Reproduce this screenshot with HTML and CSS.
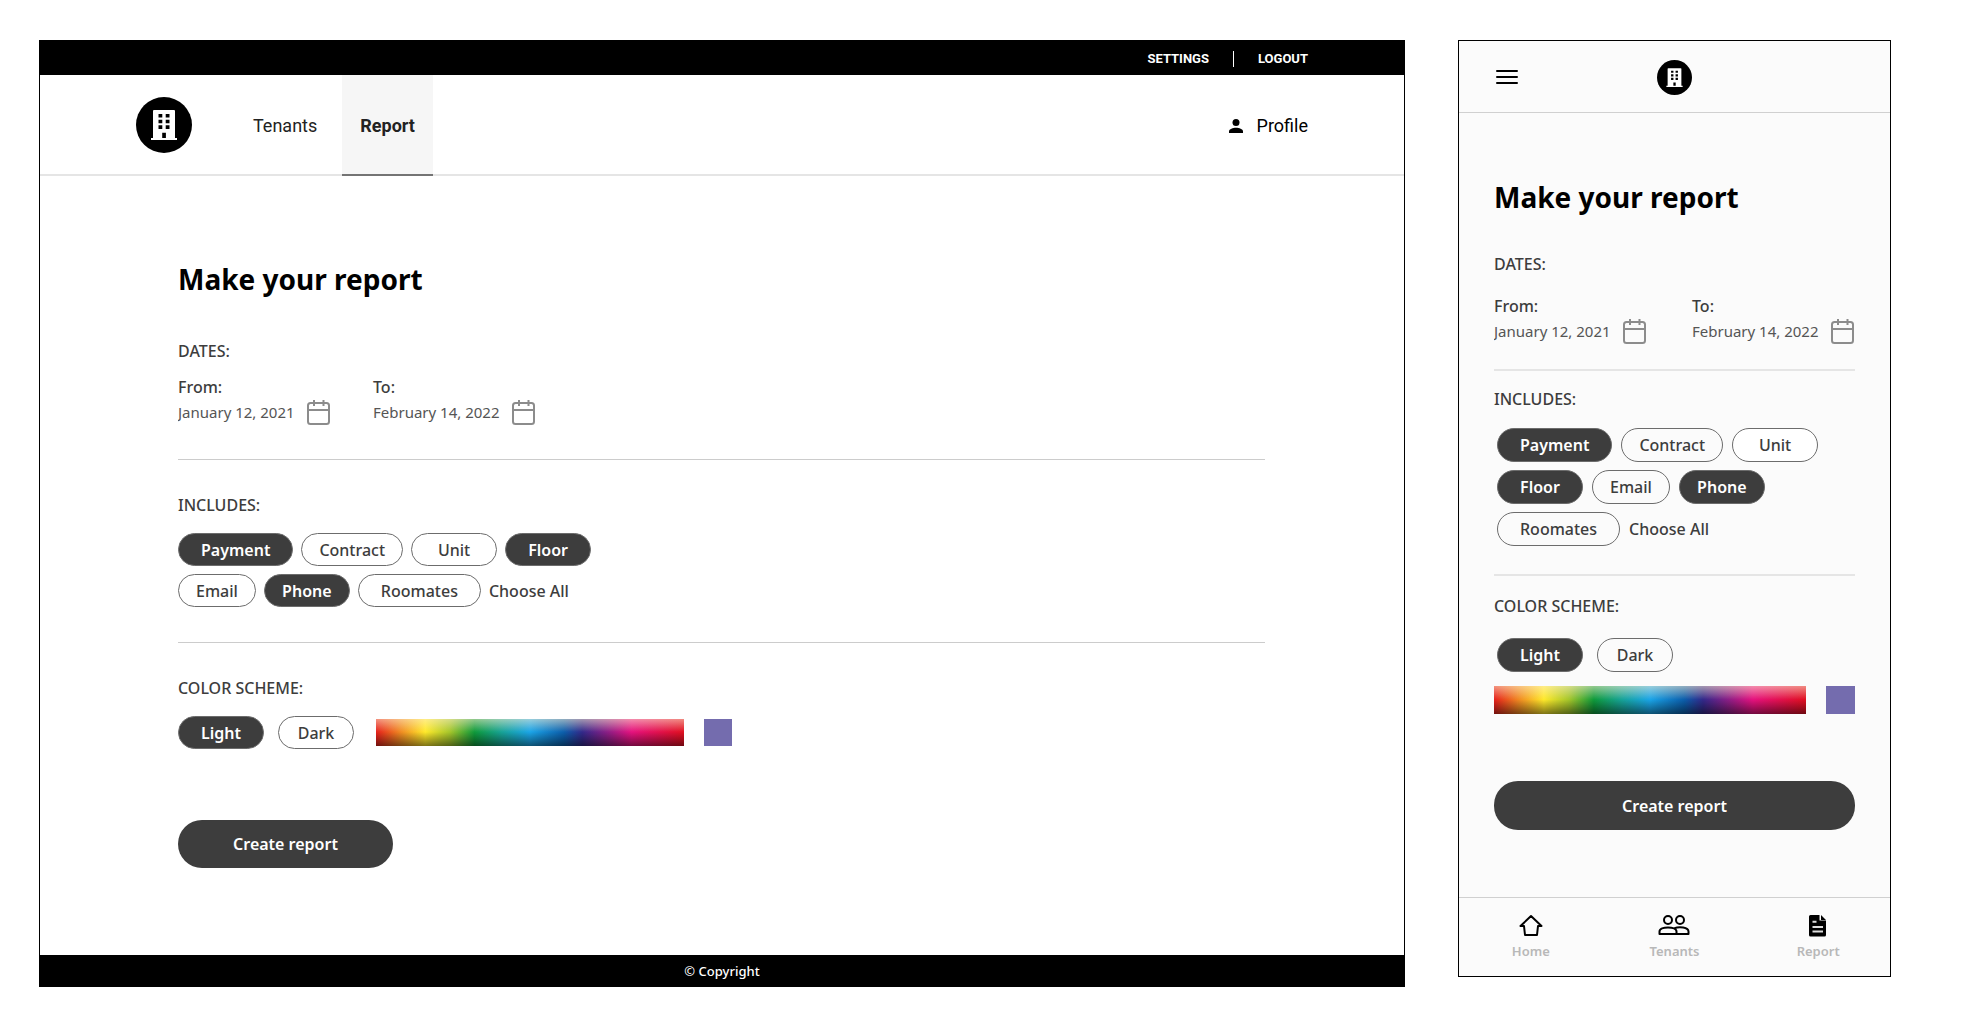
FILE: index.html
```html
<!DOCTYPE html>
<html lang="en">
<head>
<meta charset="utf-8">
<meta name="viewport" content="width=device-width, initial-scale=1">
<title>Make your report</title>
<link rel="stylesheet" href="styles.css">
</head>
<body>
<svg class="sprite" aria-hidden="true">
  <symbol id="logo" viewBox="0 0 56 56">
    <circle cx="28" cy="28" r="28" fill="#000"/>
    <path fill="#fff" fill-rule="evenodd" d="M18 13h20q1 0 1 1v27h2v2H15v-2h2V14q0-1 1-1zM22.500 17v3.500h3.800v-3.500zM29.700 17v3.500h3.800v-3.500zM22.500 22.700v3.600h3.800v-3.600zM29.700 22.700v3.600h3.800v-3.600zM22.500 28.300v3.600h3.800v-3.600zM29.700 28.300v3.600h3.800v-3.600zM26.200 35.800v5.200h3.700v-5.200z"/>
  </symbol>
  <symbol id="calendar" viewBox="0 0 24 26">
    <g fill="none" stroke="#8c8c8c" stroke-width="2">
      <rect x="1" y="4" width="21" height="21" rx="2.500"/>
      <path d="M1 11h21M7 1v6M16.500 1v6"/>
    </g>
  </symbol>
</svg>

<section class="frame desktop">
  <div class="topbar">
    <a href="#settings">SETTINGS</a>
    <a href="#logout">LOGOUT</a>
  </div>
  <header class="header">
    <a class="brand" href="#home" aria-label="Home"><svg class="brand-icon"><use href="#logo"/></svg></a>
    <nav class="tabs">
      <a class="tab" href="#tenants">Tenants</a>
      <a class="tab tab-active" href="#report">Report</a>
    </nav>
    <a class="profile" href="#profile">
      <svg width="14" height="14" viewBox="0 0 14 14" aria-hidden="true"><circle cx="7" cy="3.500" r="3.500"/><path d="M0 14v-1.600C0 10 4 8.800 7 8.800s7 1.200 7 3.600V14z"/></svg>
      Profile
    </a>
  </header>
  <main class="report">
    <h1>Make your report</h1>
    <form>
      <fieldset class="group">
        <legend>DATES:</legend>
        <div class="dates">
          <div class="date">
            <label for="d-from">From:</label>
            <div class="date-row">
              <input class="date-from" id="d-from" type="text" value="January 12, 2021">
              <button type="button" aria-label="Pick start date"><svg><use href="#calendar"/></svg></button>
            </div>
          </div>
          <div class="date">
            <label for="d-to">To:</label>
            <div class="date-row">
              <input class="date-to" id="d-to" type="text" value="February 14, 2022">
              <button type="button" aria-label="Pick end date"><svg><use href="#calendar"/></svg></button>
            </div>
          </div>
        </div>
      </fieldset>
      <fieldset class="group">
        <legend>INCLUDES:</legend>
        <div class="chips">
          <label class="chip chip-wide"><input type="checkbox" checked>Payment</label>
          <label class="chip chip-compact"><input type="checkbox">Contract</label>
          <label class="chip"><input type="checkbox">Unit</label>
          <label class="chip"><input type="checkbox" checked>Floor</label>
          <label class="chip chip-compact"><input type="checkbox">Email</label>
          <label class="chip"><input type="checkbox" checked>Phone</label>
          <label class="chip chip-wide"><input type="checkbox">Roomates</label>
          <button class="choose-all" type="button">Choose All</button>
        </div>
      </fieldset>
      <fieldset class="group">
        <legend>COLOR SCHEME:</legend>
        <div class="scheme">
          <div class="modes">
            <label class="chip"><input type="radio" name="d-mode" checked>Light</label>
            <label class="chip chip-compact"><input type="radio" name="d-mode">Dark</label>
          </div>
          <div class="picker">
            <input class="spectrum" type="range" aria-label="Hue">
            <input class="swatch" type="color" value="#746cae" aria-label="Selected color">
          </div>
        </div>
      </fieldset>
      <button class="submit" type="submit">Create report</button>
    </form>
  </main>
  <footer class="footer">© Copyright</footer>
</section>

<section class="frame mobile">
  <header class="m-header">
    <button class="menu" type="button" aria-label="Menu"><svg width="22" height="16" viewBox="0 0 22 16"><path d="M1 2h20M1 8h20M1 14h20" stroke="#000" stroke-width="2" stroke-linecap="round"/></svg></button>
    <a class="brand" href="#home" aria-label="Home"><svg class="brand-icon"><use href="#logo"/></svg></a>
  </header>
  <main class="report">
    <h1>Make your report</h1>
    <form>
      <fieldset class="group">
        <legend>DATES:</legend>
        <div class="dates">
          <div class="date">
            <label for="m-from">From:</label>
            <div class="date-row">
              <input class="date-from" id="m-from" type="text" value="January 12, 2021">
              <button type="button" aria-label="Pick start date"><svg><use href="#calendar"/></svg></button>
            </div>
          </div>
          <div class="date">
            <label for="m-to">To:</label>
            <div class="date-row">
              <input class="date-to" id="m-to" type="text" value="February 14, 2022">
              <button type="button" aria-label="Pick end date"><svg><use href="#calendar"/></svg></button>
            </div>
          </div>
        </div>
      </fieldset>
      <fieldset class="group">
        <legend>INCLUDES:</legend>
        <div class="chips">
          <label class="chip chip-wide"><input type="checkbox" checked>Payment</label>
          <label class="chip chip-compact"><input type="checkbox">Contract</label>
          <label class="chip chip-filled"><input type="checkbox">Unit</label>
          <label class="chip"><input type="checkbox" checked>Floor</label>
          <label class="chip chip-compact"><input type="checkbox">Email</label>
          <label class="chip"><input type="checkbox" checked>Phone</label>
          <label class="chip chip-wide"><input type="checkbox">Roomates</label>
          <button class="choose-all" type="button">Choose All</button>
        </div>
      </fieldset>
      <fieldset class="group">
        <legend>COLOR SCHEME:</legend>
        <div class="scheme">
          <div class="modes">
            <label class="chip"><input type="radio" name="m-mode" checked>Light</label>
            <label class="chip chip-compact"><input type="radio" name="m-mode">Dark</label>
          </div>
          <div class="picker">
            <input class="spectrum" type="range" aria-label="Hue">
            <input class="swatch" type="color" value="#746cae" aria-label="Selected color">
          </div>
        </div>
      </fieldset>
      <button class="submit" type="submit">Create report</button>
    </form>
  </main>
  <nav class="bottom-nav">
    <a href="#home">
      <svg width="32" height="24" viewBox="0 0 32 24" fill="none" stroke="#000" stroke-width="2" stroke-linejoin="round" stroke-linecap="round"><path d="M16 3L5.500 13H9l1 9h12l1-9h3.500z"/></svg>
      Home
    </a>
    <a href="#tenants">
      <svg width="32" height="24" viewBox="0 0 32 24" fill="none" stroke="#000" stroke-width="2" stroke-linejoin="round"><circle cx="10" cy="7" r="4"/><circle cx="22" cy="7" r="4"/><path d="M1.500 21v-2.500c0-5.500 17-5.500 17 0V21zM16.500 15.200c4.500-1.800 14-1.200 14 3.300V21h-12"/></svg>
      Tenants
    </a>
    <a href="#report">
      <svg width="32" height="24" viewBox="0 0 32 24"><path d="M9 2h8.500v5.500H24V22a1.500 1.500 0 0 1-1.500 1.500H8.500A1.500 1.500 0 0 1 7 22V3.500A1.500 1.500 0 0 1 8.500 2zM19 2l5 5h-5z" fill="#000"/><path d="M10.500 8.800h4M10.500 14h10.500M10.500 18.500h10.500" stroke="#ddd" stroke-width="2"/></svg>
      Report
    </a>
  </nav>
</section>
</body>
</html>
```
FILE: styles.css
```css
* { box-sizing: border-box; }

body {
  display: flex;
  align-items: flex-start;
  gap: 53px;
  margin: 0;
  padding: 40px 73px 40px 39px;
  background: #fff;
  color: #3d3d3d;
  font: 500 16px/24px "Noto Sans", sans-serif;
}

a { color: inherit; text-decoration: none; }
svg { display: block; }

button, input {
  margin: 0;
  padding: 0;
  border: 0;
  background: none;
  color: inherit;
  font: inherit;
}

button { cursor: pointer; }
.sprite { position: absolute; width: 0; height: 0; }

.frame {
  display: flex;
  flex-direction: column;
  min-width: 0;
  border: 1px solid #000;
}

.desktop { flex: 1364 1 0; }
.mobile { flex: 431 1 0; background: #fbfbfb; }

/* Desktop chrome */
.topbar {
  display: flex;
  align-items: center;
  justify-content: flex-end;
  height: 34px;
  padding: 2px 96px 0 0;
  background: #000;
  color: #fff;
  font: 700 13px/16px Roboto, sans-serif;
}

.topbar a + a {
  margin-left: 24px;
  padding-left: 24px;
  border-left: 1px solid #fff;
}

.header {
  display: flex;
  align-items: center;
  height: 101px;
  padding: 0 96px;
  border-bottom: 2px solid #e5e5e5;
  font: 400 18px/24px Roboto, sans-serif;
}

.brand-icon { width: 56px; height: 56px; }

.tabs {
  display: flex;
  align-self: stretch;
  gap: 7px;
  margin: 0 auto -2px 43px;
}

.tab {
  display: flex;
  align-items: center;
  padding: 2px 18px 0;
  border-bottom: 2px solid transparent;
  color: #222;
}

.tab-active {
  border-color: #747474;
  background: #f6f6f6;
  font-weight: 700;
}

.profile {
  display: flex;
  align-items: center;
  gap: 14px;
  padding-top: 2px;
  color: #000;
}

.footer {
  height: 31px;
  background: #000;
  color: #fff;
  font-size: 13px;
  line-height: 32px;
  text-align: center;
}

/* Report form */
.report { padding: 83px 139px 87px 138px; }

h1 {
  margin: 0 0 40px;
  color: #000;
  font-size: 28px;
  font-weight: 700;
  line-height: 40px;
}

.group {
  min-width: 0;
  margin: 0 0 33px;
  padding: 0 0 34px;
  border: 0;
  border-bottom: 1px solid #ccc;
}

.group:nth-of-type(2) { padding-bottom: 35px; }

.group:nth-of-type(3) {
  margin: 0 0 71px;
  padding: 0;
  border: 0;
}

legend { display: block; padding: 0; margin-bottom: 16px; }

.dates { display: flex; gap: 42px; margin-top: -4px; }
.date label { display: block; }
.date-row { display: flex; align-items: center; height: 26px; }
.date-row input { font-size: 15px; font-weight: 400; color: #555; }
.date-from { width: 129px; }
.date-to { width: 139px; }
.date-row svg { width: 24px; height: 26px; }

.chips {
  display: flex;
  flex-wrap: wrap;
  gap: 8px;
  max-width: 430px;
}

.chip {
  display: flex;
  align-items: center;
  justify-content: center;
  min-width: 86px;
  height: 33px;
  padding: 0 17px;
  border: 1px solid #6c6c6c;
  border-radius: 17px;
  cursor: pointer;
}

.chip-wide { padding: 0 22px; }
.chip-compact { min-width: 76px; }
.chip-filled { background: #fff; }

.chip input {
  position: absolute;
  width: 1px;
  height: 1px;
  opacity: 0;
  appearance: none;
}

.chip:has(:checked) {
  background: #3d3d3d;
  color: #fff;
  font-weight: 600;
}

.scheme { display: flex; align-items: center; gap: 22px; }
.modes { display: flex; gap: 14px; }
.picker { display: flex; gap: 20px; }

.spectrum {
  width: 308px;
  height: 27px;
  appearance: none;
  background:
    linear-gradient(rgb(255 240 210 / 55%), transparent 48%, rgb(0 0 0 / 50%)),
    linear-gradient(90deg, #e5201c, #f08a22 8%, #ffe92b 16%, #a5c62b 24%, #0f9a3b 32%, #17a398 41%, #1ba5e8 50%, #0c5eab 61%, #33298a 67%, #8a1f86 75%, #e5127f 83%, #e01020);
}

.spectrum::-webkit-slider-thumb { appearance: none; width: 1px; height: 27px; }
.swatch { width: 28px; height: 27px; appearance: none; }
.swatch::-webkit-color-swatch-wrapper { padding: 0; }
.swatch::-webkit-color-swatch { border: 0; border-radius: 0; }

.submit {
  display: block;
  width: 215px;
  height: 48px;
  border-radius: 24px;
  background: #3d3d3d;
  color: #fff;
  font-weight: 600;
}

/* Mobile */
.m-header {
  display: grid;
  grid-template-columns: 1fr auto 1fr;
  align-items: center;
  height: 72px;
  padding: 1px 37px 0;
  border-bottom: 1px solid #d0d0d0;
}

.menu { justify-self: start; }
.mobile .brand-icon { width: 35px; height: 35px; }
.mobile .report { padding: 64px 35px 67px; }
.mobile h1 { margin-bottom: 35px; }

.mobile .group {
  margin-bottom: 16px;
  padding-bottom: 25px;
  border-bottom: 2px solid #e5e5e5;
}

.mobile .group:nth-of-type(2) { margin-bottom: 18px; padding-bottom: 28px; }

.mobile .group:nth-of-type(3) {
  margin-bottom: 67px;
  padding: 0;
  border: 0;
}

.mobile legend { margin-bottom: 18px; }
.mobile .dates { justify-content: space-between; gap: 0; margin-top: 0; }
.mobile .chips { padding-left: 3px; column-gap: 9px; }
.mobile .group:nth-of-type(2) legend { margin-bottom: 17px; }
.mobile .chip { height: 34px; }
.mobile .scheme { display: block; }
.mobile .modes { padding: 2px 0 14px 3px; }
.mobile .spectrum { flex: 1; min-width: 0; }
.mobile .swatch { width: 29px; }
.mobile .spectrum, .mobile .swatch { height: 28px; }
.mobile .submit { width: 100%; height: 49px; }

.bottom-nav {
  display: grid;
  grid-template-columns: repeat(3, 1fr);
  height: 79px;
  padding-top: 15px;
  border-top: 1px solid #d0d0d0;
  color: #b8b8b8;
  font-size: 13px;
  font-weight: 600;
  line-height: 20px;
}

.bottom-nav a {
  display: flex;
  flex-direction: column;
  align-items: center;
  gap: 4px;
}
```
